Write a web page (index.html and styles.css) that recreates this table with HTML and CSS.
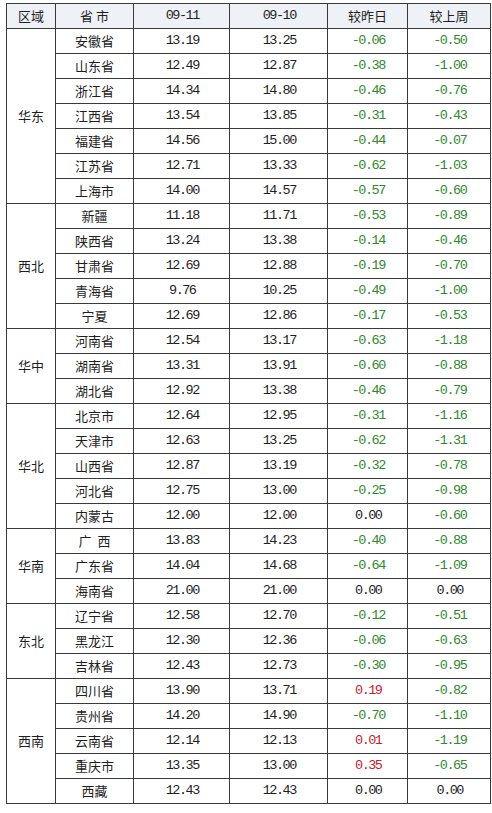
FILE: index.html
```html
<!DOCTYPE html>
<html lang="zh">
<head>
<meta charset="utf-8">
<title>生猪价格</title>
<link rel="stylesheet" href="styles.css">
</head>
<body>
<table class="price">
<colgroup>
<col class="c-area"><col class="c-prov"><col class="c-d1"><col class="c-d2"><col class="c-day"><col class="c-week">
</colgroup>
<thead>
<tr><th>区域</th><th>省&nbsp;市</th><th class="num">09-11</th><th class="num">09-10</th><th>较昨日</th><th>较上周</th></tr>
</thead>
<tbody>
<tr><td rowspan="7" class="area">华东</td><td>安徽省</td><td class="num">13.19</td><td class="num">13.25</td><td class="num dn">-0.06</td><td class="num dn">-0.50</td></tr>
<tr><td>山东省</td><td class="num">12.49</td><td class="num">12.87</td><td class="num dn">-0.38</td><td class="num dn">-1.00</td></tr>
<tr><td>浙江省</td><td class="num">14.34</td><td class="num">14.80</td><td class="num dn">-0.46</td><td class="num dn">-0.76</td></tr>
<tr><td>江西省</td><td class="num">13.54</td><td class="num">13.85</td><td class="num dn">-0.31</td><td class="num dn">-0.43</td></tr>
<tr><td>福建省</td><td class="num">14.56</td><td class="num">15.00</td><td class="num dn">-0.44</td><td class="num dn">-0.07</td></tr>
<tr><td>江苏省</td><td class="num">12.71</td><td class="num">13.33</td><td class="num dn">-0.62</td><td class="num dn">-1.03</td></tr>
<tr><td>上海市</td><td class="num">14.00</td><td class="num">14.57</td><td class="num dn">-0.57</td><td class="num dn">-0.60</td></tr>

<tr><td rowspan="5" class="area">西北</td><td>新疆</td><td class="num">11.18</td><td class="num">11.71</td><td class="num dn">-0.53</td><td class="num dn">-0.89</td></tr>
<tr><td>陕西省</td><td class="num">13.24</td><td class="num">13.38</td><td class="num dn">-0.14</td><td class="num dn">-0.46</td></tr>
<tr><td>甘肃省</td><td class="num">12.69</td><td class="num">12.88</td><td class="num dn">-0.19</td><td class="num dn">-0.70</td></tr>
<tr><td>青海省</td><td class="num">9.76</td><td class="num">10.25</td><td class="num dn">-0.49</td><td class="num dn">-1.00</td></tr>
<tr><td>宁夏</td><td class="num">12.69</td><td class="num">12.86</td><td class="num dn">-0.17</td><td class="num dn">-0.53</td></tr>

<tr><td rowspan="3" class="area">华中</td><td>河南省</td><td class="num">12.54</td><td class="num">13.17</td><td class="num dn">-0.63</td><td class="num dn">-1.18</td></tr>
<tr><td>湖南省</td><td class="num">13.31</td><td class="num">13.91</td><td class="num dn">-0.60</td><td class="num dn">-0.88</td></tr>
<tr><td>湖北省</td><td class="num">12.92</td><td class="num">13.38</td><td class="num dn">-0.46</td><td class="num dn">-0.79</td></tr>

<tr><td rowspan="5" class="area">华北</td><td>北京市</td><td class="num">12.64</td><td class="num">12.95</td><td class="num dn">-0.31</td><td class="num dn">-1.16</td></tr>
<tr><td>天津市</td><td class="num">12.63</td><td class="num">13.25</td><td class="num dn">-0.62</td><td class="num dn">-1.31</td></tr>
<tr><td>山西省</td><td class="num">12.87</td><td class="num">13.19</td><td class="num dn">-0.32</td><td class="num dn">-0.78</td></tr>
<tr><td>河北省</td><td class="num">12.75</td><td class="num">13.00</td><td class="num dn">-0.25</td><td class="num dn">-0.98</td></tr>
<tr><td>内蒙古</td><td class="num">12.00</td><td class="num">12.00</td><td class="num">0.00</td><td class="num dn">-0.60</td></tr>

<tr><td rowspan="3" class="area">华南</td><td>广&nbsp;&nbsp;西</td><td class="num">13.83</td><td class="num">14.23</td><td class="num dn">-0.40</td><td class="num dn">-0.88</td></tr>
<tr><td>广东省</td><td class="num">14.04</td><td class="num">14.68</td><td class="num dn">-0.64</td><td class="num dn">-1.09</td></tr>
<tr><td>海南省</td><td class="num">21.00</td><td class="num">21.00</td><td class="num">0.00</td><td class="num">0.00</td></tr>

<tr><td rowspan="3" class="area">东北</td><td>辽宁省</td><td class="num">12.58</td><td class="num">12.70</td><td class="num dn">-0.12</td><td class="num dn">-0.51</td></tr>
<tr><td>黑龙江</td><td class="num">12.30</td><td class="num">12.36</td><td class="num dn">-0.06</td><td class="num dn">-0.63</td></tr>
<tr><td>吉林省</td><td class="num">12.43</td><td class="num">12.73</td><td class="num dn">-0.30</td><td class="num dn">-0.95</td></tr>

<tr><td rowspan="5" class="area">西南</td><td>四川省</td><td class="num">13.90</td><td class="num">13.71</td><td class="num up">0.19</td><td class="num dn">-0.82</td></tr>
<tr><td>贵州省</td><td class="num">14.20</td><td class="num">14.90</td><td class="num dn">-0.70</td><td class="num dn">-1.10</td></tr>
<tr><td>云南省</td><td class="num">12.14</td><td class="num">12.13</td><td class="num up">0.01</td><td class="num dn">-1.19</td></tr>
<tr><td>重庆市</td><td class="num">13.35</td><td class="num">13.00</td><td class="num up">0.35</td><td class="num dn">-0.65</td></tr>
<tr><td>西藏</td><td class="num">12.43</td><td class="num">12.43</td><td class="num">0.00</td><td class="num">0.00</td></tr>
</tbody>
</table>
</body>
</html>
```

FILE: styles.css
```css
html, body {
  margin: 0;
  padding: 0;
  background: #ffffff;
}
body {
  padding: 3px 0 0 6px;
  font-family: "Noto Sans CJK SC", "Noto Sans", sans-serif;
  font-size: 13px;
  color: #1e1e1e;
}
.price {
  border-collapse: collapse;
  table-layout: fixed;
  width: 484px;
}
.c-area { width: 49px; }
.c-prov { width: 78px; }
.c-d1 { width: 96px; }
.c-d2 { width: 98px; }
.c-day { width: 80px; }
.c-week { width: 83px; }
.price th,
.price td {
  border: 1px solid #3a3a3a;
  height: 24px;
  padding: 0;
  text-align: center;
  vertical-align: middle;
  line-height: 16px;
  font-weight: normal;
  white-space: nowrap;
}
.price thead th {
  background: #eef1f6;
}
.price .num {
  font-family: "Liberation Mono", "DejaVu Sans Mono", monospace;
  font-size: 13.5px;
  letter-spacing: -1.5px;
  text-indent: 1.5px;
}
.price .dn { color: #2f8a2f; }
.price .up { color: #c8202c; }
```
